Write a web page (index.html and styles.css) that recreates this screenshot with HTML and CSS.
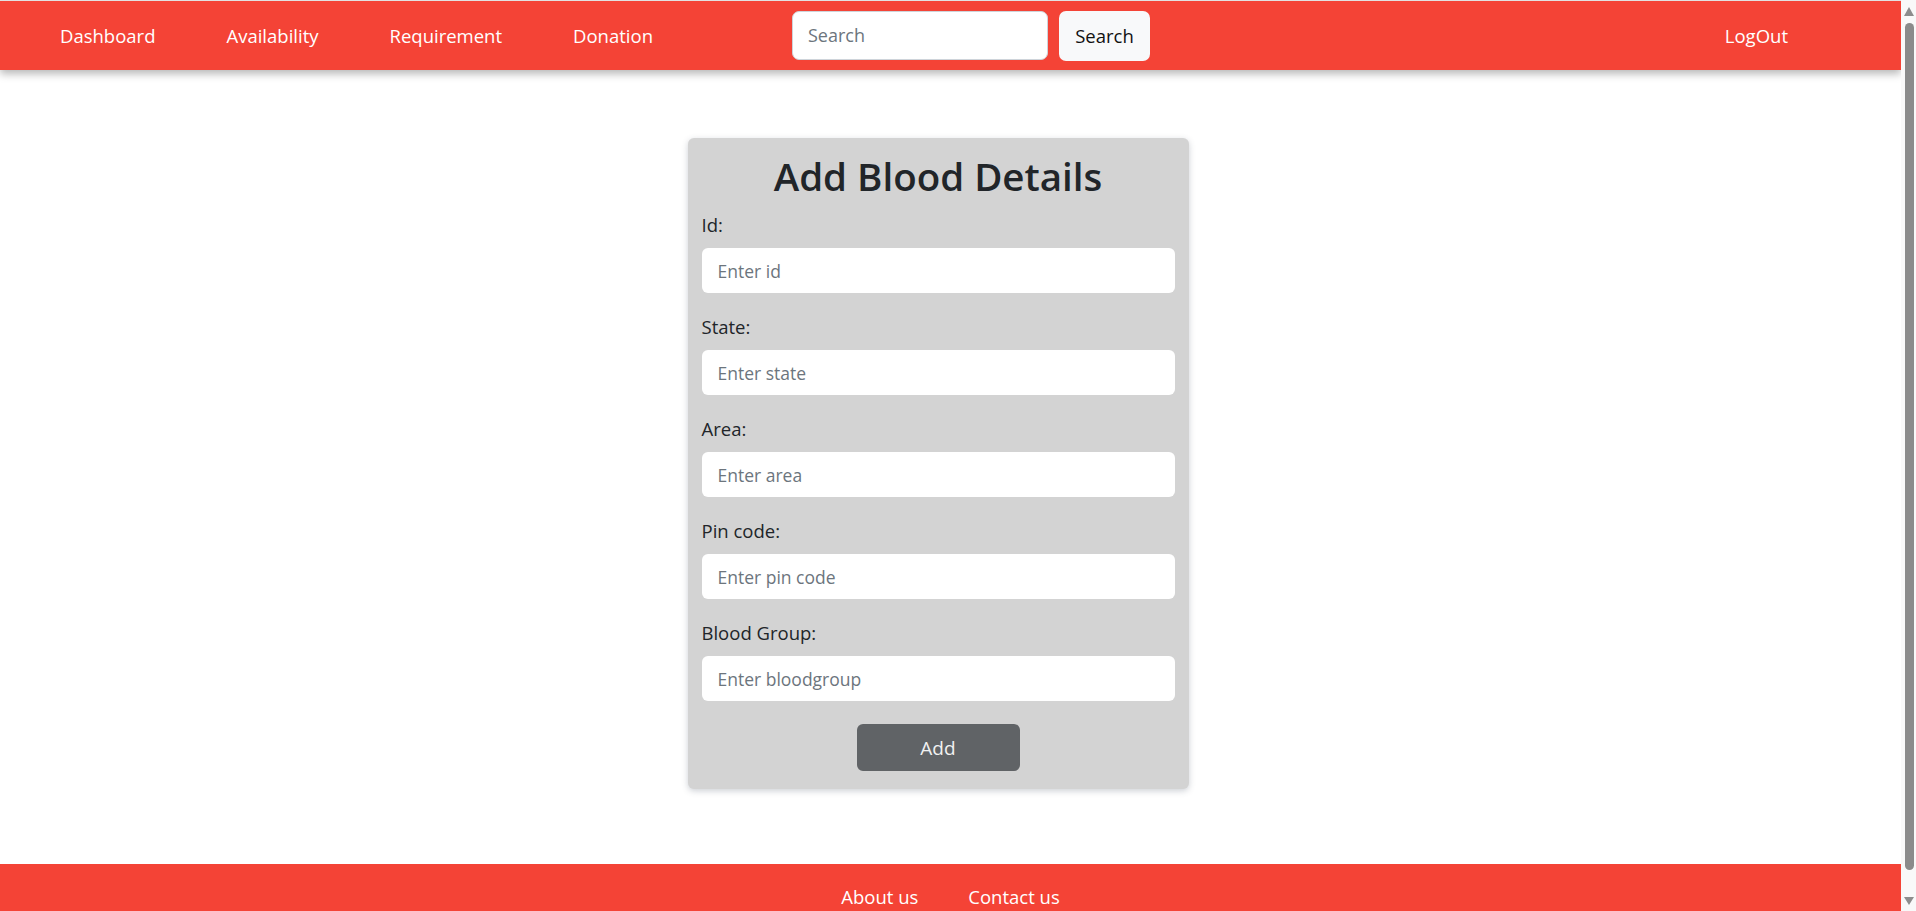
FILE: index.html
```html
<!DOCTYPE html>
<html lang="en">
<head>
<meta charset="utf-8">
<title>Add Blood Details</title>
<link rel="stylesheet" href="styles.css">
</head>
<body>
<header class="navbar">
  <nav class="nav-links">
    <a href="#" class="nav-link">Dashboard</a>
    <a href="#" class="nav-link">Availability</a>
    <a href="#" class="nav-link">Requirement</a>
    <a href="#" class="nav-link">Donation</a>
  </nav>
  <form class="search-form">
    <input class="search-input" type="text" placeholder="Search">
    <button class="search-btn" type="button">Search</button>
  </form>
  <a href="#" class="nav-link logout">LogOut</a>
</header>

<main class="main">
  <form class="card">
    <h1 class="card-title">Add Blood Details</h1>
    <div class="field">
      <label class="field-label">Id:</label>
      <input class="field-input" type="text" placeholder="Enter id">
    </div>
    <div class="field">
      <label class="field-label">State:</label>
      <input class="field-input" type="text" placeholder="Enter state">
    </div>
    <div class="field">
      <label class="field-label">Area:</label>
      <input class="field-input" type="text" placeholder="Enter area">
    </div>
    <div class="field">
      <label class="field-label">Pin code:</label>
      <input class="field-input" type="text" placeholder="Enter pin code">
    </div>
    <div class="field">
      <label class="field-label">Blood Group:</label>
      <input class="field-input" type="text" placeholder="Enter bloodgroup">
    </div>
    <div class="actions">
      <button class="add-btn" type="button">Add</button>
    </div>
  </form>
</main>

<footer class="footer">
  <a href="#" class="footer-link">About us</a>
  <a href="#" class="footer-link">Contact us</a>
</footer>

<div class="scrollbar" aria-hidden="true">
  <span class="scroll-arrow up"></span>
  <span class="scroll-thumb"></span>
  <span class="scroll-arrow down"></span>
</div>
</body>
</html>
```

FILE: styles.css
```css
* { box-sizing: border-box; }

html {
  margin: 0;
  padding: 0;
  overflow-y: scroll;
}

body {
  margin: 0 15px 0 0;
  padding: 0;
  font-family: "Open Sans", "Noto Sans", sans-serif;
  font-size: 18.5px;
  color: #212529;
  background: #fff;
  border-top: 1px solid #e2e2e2;
}

.navbar {
  display: flex;
  align-items: center;
  height: 69px;
  background: #f44336;
  box-shadow: 0 4px 8px rgba(0, 0, 0, 0.28);
  padding-left: 60px;
  position: relative;
  z-index: 1;
}

.nav-links {
  display: flex;
  gap: 71px;
}

.nav-link {
  color: #fff;
  text-decoration: none;
  font-size: 18.5px;
}

.search-form {
  display: flex;
  gap: 11px;
  margin-left: 139px;
}

.search-input {
  width: 256px;
  height: 49px;
  border: 1px solid #ced4da;
  border-radius: 7px;
  padding: 0 15px;
  font-family: inherit;
  font-size: 18px;
  color: #212529;
  background: #fff;
}

.search-input::placeholder { color: #6c757d; }

.search-btn {
  width: 91px;
  height: 50px;
  border: none;
  border-radius: 7px;
  background: #f8f9fa;
  color: #111;
  font-family: inherit;
  font-size: 18.5px;
}

.logout {
  margin-left: auto;
  margin-right: 113px;
}

.main {
  display: flex;
  justify-content: center;
  padding: 68px 25px 75px 0;
}

.card {
  width: 501px;
  background: #d3d3d3;
  border-radius: 6px;
  box-shadow: 0 2px 6px rgba(60, 70, 90, 0.25);
  padding: 8px 14px 18px;
}

.card-title {
  margin: 0 0 4px;
  text-align: center;
  font-size: 38.5px;
  line-height: 60px;
  font-weight: 600;
  color: #212529;
}

.field {
  margin-bottom: 19px;
}

.field-label {
  display: block;
  line-height: 30px;
  margin-bottom: 8px;
  font-size: 18.5px;
  color: #212529;
}

.field-input {
  display: block;
  width: 100%;
  height: 45px;
  border: none;
  border-radius: 6px;
  background: #fff;
  padding: 0 16px;
  font-family: inherit;
  font-size: 17.5px;
  color: #212529;
}

.field-input::placeholder { color: #6c757d; }

.actions {
  display: flex;
  justify-content: center;
  padding-top: 4px;
}

.add-btn {
  width: 163px;
  height: 47px;
  border: none;
  border-radius: 6px;
  background: #606366;
  color: #f1f1f1;
  font-family: inherit;
  font-size: 19px;
}

.footer {
  display: flex;
  justify-content: center;
  gap: 50px;
  background: #f44336;
  padding: 18px 0 26px;
}

.footer-link {
  color: #fff;
  text-decoration: none;
  font-size: 18.5px;
  line-height: 30px;
}

/* visual scrollbar (the headless renderer hides native ones) */
.scrollbar {
  position: fixed;
  top: 0;
  right: 0;
  width: 15px;
  height: 100vh;
  background: #f9f9f9;
  display: flex;
  flex-direction: column;
  align-items: center;
  padding: 7px 0 6px;
  z-index: 5;
}

.scroll-arrow {
  width: 0;
  height: 0;
  border-left: 5px solid transparent;
  border-right: 5px solid transparent;
}

.scroll-arrow.up {
  border-bottom: 9px solid #8d8d8d;
}

.scroll-arrow.down {
  border-top: 8px solid #8d8d8d;
}

.scroll-thumb {
  flex: 1;
  width: 9px;
  margin: 7px 0 27px 2px;
  border-radius: 5px;
  background: #8b8b8b;
}
```
